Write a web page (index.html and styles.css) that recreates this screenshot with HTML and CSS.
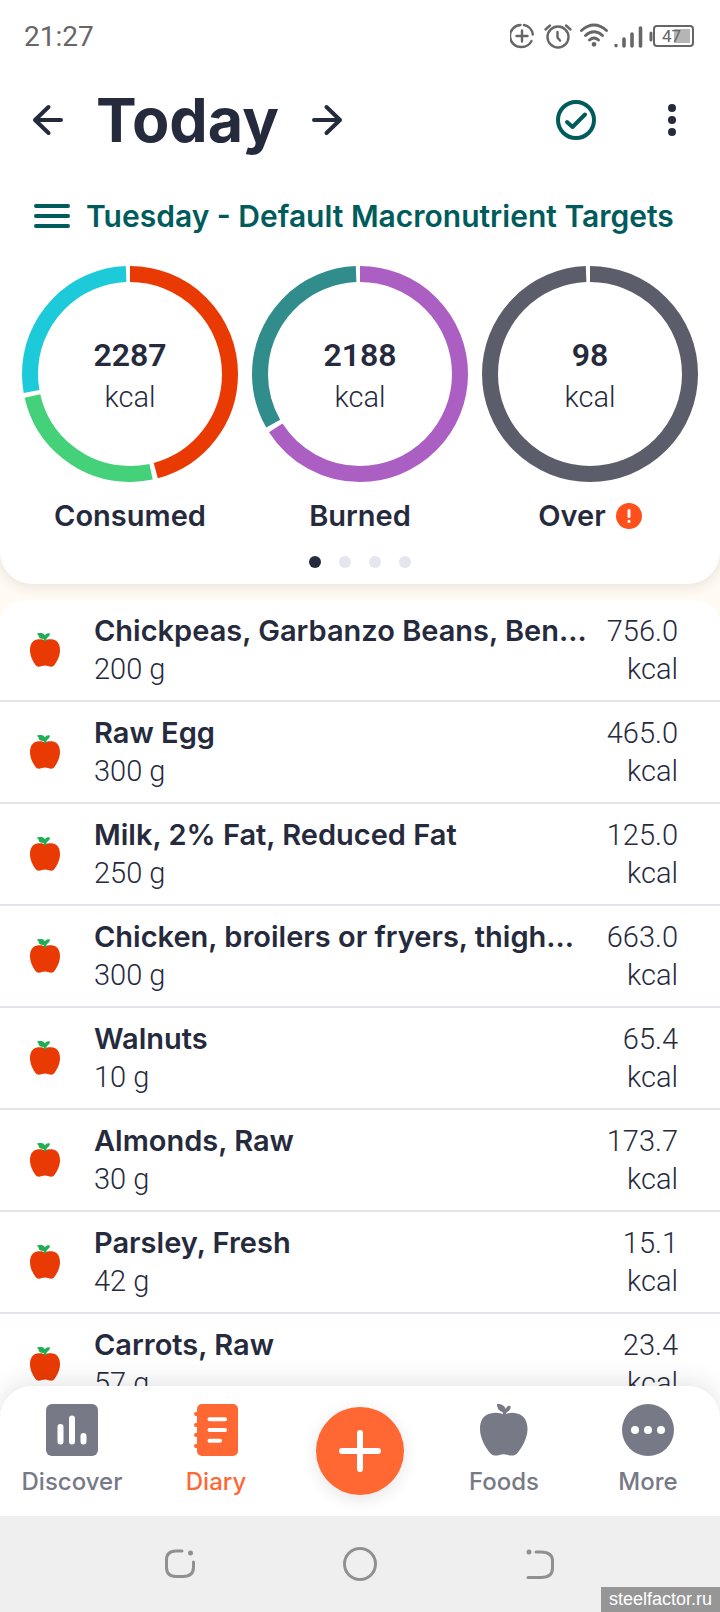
FILE: index.html
```html
<!DOCTYPE html>
<html lang="en">
<head>
  <meta charset="UTF-8">
  <meta name="viewport" content="width=device-width, initial-scale=1">
  <title>Diary - Today</title>
  <link rel="stylesheet" href="styles.css">
</head>
<body>
  <svg class="defs" aria-hidden="true">
    <symbol id="apple" viewBox="0 0 48 52">
      <path class="apple-body" d="M24 11C27 9 32 8 37 9.500C44 11 47.500 17 47.500 25C47.500 34 42 44 37 49.500C34 52 31 52 28 51C25 50 22 50 19.500 51C16 52 13.500 52 10.500 49.500C5.500 44 0 34 0 25C0 17 3 11 10.500 9.500C16 8 21 9 24 11Z"/>
      <path class="apple-leaf" d="M17 0C22 0 25 2 25.500 5C27 2 29 1 30.500 2C31 5 29 7 27 8C26 9 26 10 26 12H22.500C23 10 23 9 22.500 8C19 7 17 4 17 0Z"/>
    </symbol>
    <symbol id="apple-small" viewBox="0 0 30 34">
      <path class="apple-body" d="M15 7.500C17 6.500 20 6 23 6.500C28 7.500 30 12 30 17C30 23 27 29 23.500 33C21.500 34.500 20 33.500 18 33C16 32.300 14 32.300 12 33C10 33.500 8.500 34.500 6.500 33C3 29 0 23 0 17C0 12 2 7.500 7 6.500C10 6 13 6.500 15 7.500Z"/>
      <path class="apple-leaf" d="M7 .5C10 -.5 14 -.3 15 2.500C16 .5 18 -.2 20 .8C19.500 3.500 18 4 16.500 5.500V8.200H13.800V6C10 6 8.500 4.500 8.700 3C8.500 2 7.300 1.500 7 .5Z"/>
    </symbol>
  </svg>

  <div class="app">
    <section class="summary">
      <div class="status">
        <span class="clock">21:27</span>
        <svg class="status-icons" width="186" height="28" viewBox="0 0 186 28" fill="none" stroke="#666" stroke-width="2.400" stroke-linecap="round">
          <!-- data saver -->
          <path d="M10.500 3A11 11 0 0 0 11.500 25A11 11 0 0 0 21.500 19M14 3A11 11 0 0 1 22.800 12.500M12 8.500V19.500M6.500 14H17.500"/>
          <!-- alarm -->
          <circle cx="48" cy="15" r="10.500"/>
          <path d="M47.500 10V15.500L50 18.500M35.500 7.500L40 3.500M60.500 7.500L56 3.500"/>
          <!-- wifi -->
          <path d="M71.500 8.500Q84 -2.500 96.500 8.500M75.500 13.500Q84 6 92.500 13.500M79.500 18Q84 14 88.500 18" stroke-width="2.800"/>
          <circle cx="84" cy="22.300" r="1.200"/>
          <!-- signal -->
          <path d="M106 23.500V23.600M114 17V24M122 12V24M130.500 6V24" stroke-width="3.600"/>
          <!-- battery -->
          <rect x="164" y="7" width="16" height="14" fill="#b5b5b5" stroke="none"/>
          <rect x="144" y="4" width="39" height="20" rx="3" stroke-width="2"/>
          <path d="M141 11V18" stroke-width="3"/>
          <text class="battery-text" x="152" y="20">47</text>
        </svg>
      </div>

      <header class="header">
        <button class="icon-btn" aria-label="Previous day">
          <svg width="32" height="32" viewBox="0 0 32 32" fill="none" stroke="currentColor" stroke-width="4" stroke-linecap="round" stroke-linejoin="round"><path d="M29 16H3M16.500 3L3 16L16.500 29"/></svg>
        </button>
        <h1>Today</h1>
        <button class="icon-btn" aria-label="Next day">
          <svg width="32" height="32" viewBox="0 0 32 32" fill="none" stroke="currentColor" stroke-width="4" stroke-linecap="round" stroke-linejoin="round"><path d="M3 16H29M15.500 3L29 16L15.500 29"/></svg>
        </button>
        <span class="spacer"></span>
        <button class="icon-btn done" aria-label="Mark day complete">
          <svg width="40" height="40" viewBox="0 0 40 40" fill="none" stroke="currentColor" stroke-width="4" stroke-linecap="round" stroke-linejoin="round"><circle cx="20" cy="20" r="18"/><path d="M11 22L16.500 27L29 14.500"/></svg>
        </button>
        <button class="icon-btn menu" aria-label="Menu">
          <svg width="8" height="32" viewBox="0 0 8 32" fill="currentColor"><circle cx="4" cy="4" r="4"/><circle cx="4" cy="16" r="4"/><circle cx="4" cy="28" r="4"/></svg>
        </button>
      </header>

      <button class="targets">
        <svg width="36" height="24" viewBox="0 0 36 24" fill="none" stroke="currentColor" stroke-width="4" stroke-linecap="round"><path d="M2 2H34M2 12H34M2 22H34"/></svg>
        Tuesday - Default Macronutrient Targets
      </button>

      <div class="rings">
        <div class="ring-card">
          <div class="ring">
            <svg viewBox="0 0 216 216">
              <circle class="arc red" cx="108" cy="108" r="100" pathLength="360" stroke-dasharray="165 195"/>
              <circle class="arc green" cx="108" cy="108" r="100" pathLength="360" stroke-dasharray="89.500 270.500" stroke-dashoffset="-167.800"/>
              <circle class="arc cyan" cx="108" cy="108" r="100" pathLength="360" stroke-dasharray="97.800 262.200" stroke-dashoffset="-259.900"/>
            </svg>
            <div class="ring-text"><strong>2287</strong><span>kcal</span></div>
          </div>
          <div class="ring-label">Consumed</div>
        </div>
        <div class="ring-card">
          <div class="ring">
            <svg viewBox="0 0 216 216">
              <circle class="arc purple" cx="108" cy="108" r="100" pathLength="360" stroke-dasharray="237.400 122.600"/>
              <circle class="arc teal" cx="108" cy="108" r="100" pathLength="360" stroke-dasharray="117.500 242.500" stroke-dashoffset="-240.200"/>
            </svg>
            <div class="ring-text"><strong>2188</strong><span>kcal</span></div>
          </div>
          <div class="ring-label">Burned</div>
        </div>
        <div class="ring-card">
          <div class="ring">
            <svg viewBox="0 0 216 216">
              <circle class="arc gray" cx="108" cy="108" r="100" pathLength="360" stroke-dasharray="357.700 2.300"/>
            </svg>
            <div class="ring-text"><strong>98</strong><span>kcal</span></div>
          </div>
          <div class="ring-label">Over
            <svg width="26" height="26" viewBox="0 0 26 26"><circle cx="13" cy="13" r="13" fill="#ff4f1c"/><path d="M13 7.500V13.500M13 18.300V18.400" stroke="#fff" stroke-width="3" stroke-linecap="round"/></svg>
          </div>
        </div>
      </div>

      <div class="dots"><i class="on"></i><i></i><i></i><i></i></div>
    </section>

    <main class="list-wrap">
      <ul class="list">
        <li class="row">
          <svg class="food-icon"><use href="#apple-small"/></svg>
          <div class="food"><div class="name">Chickpeas, Garbanzo Beans, Ben…</div><div>200 g</div></div>
          <div class="energy">756.0<br>kcal</div>
        </li>
        <li class="row">
          <svg class="food-icon"><use href="#apple-small"/></svg>
          <div class="food"><div class="name">Raw Egg</div><div>300 g</div></div>
          <div class="energy">465.0<br>kcal</div>
        </li>
        <li class="row">
          <svg class="food-icon"><use href="#apple-small"/></svg>
          <div class="food"><div class="name">Milk, 2% Fat, Reduced Fat</div><div>250 g</div></div>
          <div class="energy">125.0<br>kcal</div>
        </li>
        <li class="row">
          <svg class="food-icon"><use href="#apple-small"/></svg>
          <div class="food"><div class="name">Chicken, broilers or fryers, thigh…</div><div>300 g</div></div>
          <div class="energy">663.0<br>kcal</div>
        </li>
        <li class="row">
          <svg class="food-icon"><use href="#apple-small"/></svg>
          <div class="food"><div class="name">Walnuts</div><div>10 g</div></div>
          <div class="energy">65.4<br>kcal</div>
        </li>
        <li class="row">
          <svg class="food-icon"><use href="#apple-small"/></svg>
          <div class="food"><div class="name">Almonds, Raw</div><div>30 g</div></div>
          <div class="energy">173.7<br>kcal</div>
        </li>
        <li class="row">
          <svg class="food-icon"><use href="#apple-small"/></svg>
          <div class="food"><div class="name">Parsley, Fresh</div><div>42 g</div></div>
          <div class="energy">15.1<br>kcal</div>
        </li>
        <li class="row">
          <svg class="food-icon"><use href="#apple-small"/></svg>
          <div class="food"><div class="name">Carrots, Raw</div><div>57 g</div></div>
          <div class="energy">23.4<br>kcal</div>
        </li>
      </ul>
    </main>

    <nav class="tabs">
      <a class="tab" href="#discover">
        <svg width="52" height="52" viewBox="0 0 52 52"><rect width="52" height="52" rx="6" fill="currentColor"/><path d="M14.500 23V37.500M26 14.500V37.500M37.500 32V37.500" stroke="#fff" stroke-width="6" stroke-linecap="round"/></svg>
        Discover
      </a>
      <a class="tab active" href="#diary">
        <svg width="44" height="52" viewBox="0 0 44 52"><rect x="3" width="41" height="52" rx="5" fill="currentColor"/><path d="M2 10H6M2 21H6M2 31H6M2 42H6" stroke="currentColor" stroke-width="4" stroke-linecap="round"/><path d="M15.500 15.200H31M15.500 26H31M15.500 36.800H26" stroke="#fff" stroke-width="4" stroke-linecap="round"/></svg>
        Diary
      </a>
      <div class="tab">
        <button class="add" aria-label="Add">
          <svg width="42" height="42" viewBox="0 0 42 42" stroke="#fff" stroke-width="6" stroke-linecap="round"><path d="M21 3V39M3 21H39"/></svg>
        </button>
      </div>
      <a class="tab" href="#foods">
        <svg width="48" height="52"><use href="#apple"/></svg>
        Foods
      </a>
      <a class="tab" href="#more">
        <svg width="52" height="52" viewBox="0 0 52 52"><circle cx="26" cy="26" r="26" fill="currentColor"/><g fill="#fff"><circle cx="13" cy="26" r="4"/><circle cx="26" cy="26" r="4"/><circle cx="39" cy="26" r="4"/></g></svg>
        More
      </a>
    </nav>

    <footer class="sysnav">
      <button class="icon-btn" aria-label="Recent apps">
        <svg width="32" height="32" viewBox="0 0 32 32" fill="none" stroke="#909090" stroke-width="3" stroke-linecap="round"><path d="M18 3H12Q2.500 3 2.500 12V19Q2.500 28.500 12 28.500H19Q29.500 28.500 29.500 19V14"/><circle cx="26.500" cy="5" r="2.500" fill="#909090" stroke="none"/></svg>
      </button>
      <button class="icon-btn" aria-label="Home">
        <svg width="34" height="34" viewBox="0 0 34 34" fill="none" stroke="#909090" stroke-width="3"><circle cx="17" cy="17" r="15.500"/></svg>
      </button>
      <button class="icon-btn" aria-label="Back">
        <svg width="32" height="32" viewBox="0 0 32 32" fill="none" stroke="#909090" stroke-width="3" stroke-linecap="round"><path d="M12 4H17Q28.500 4 28.500 13V20Q28.500 29.500 17 29.500H4"/><circle cx="5" cy="4" r="2.500" fill="#909090" stroke="none"/></svg>
      </button>
      <span class="watermark">steelfactor.ru</span>
    </footer>
  </div>
</body>
</html>
```
FILE: styles.css
```css
* { box-sizing: border-box; }

body {
  margin: 0;
  background: #fffaf2;
  color: #262a3d;
  font-family: Roboto, sans-serif;
  font-size: 29px;
  font-weight: 300;
  line-height: 38px;
}

svg { display: block; flex-shrink: 0; }

button {
  border: 0;
  padding: 0;
  background: none;
  color: inherit;
  cursor: pointer;
}

.defs { position: absolute; width: 0; height: 0; }
.apple-body { fill: var(--body, currentColor); }
.apple-leaf { fill: var(--leaf, currentColor); }

.app {
  display: flex;
  flex-direction: column;
  height: 100vh;
}

/* top card */
.summary {
  background: #fff;
  border-radius: 0 0 32px 32px;
  box-shadow: 0 2px 14px rgba(60, 50, 40, 0.12);
  padding-bottom: 16px;
}

.status {
  display: flex;
  align-items: center;
  justify-content: space-between;
  height: 72px;
  padding: 0 24px;
  color: #666;
  font-size: 28px;
  font-weight: 400;
}

.clock { padding-top: 2px; }

.battery-text {
  fill: #666;
  stroke: none;
  font-size: 17px;
}

.header {
  display: flex;
  align-items: center;
  height: 96px;
  padding: 0 44px 0 32px;
}

.header h1 {
  margin: 0 32px;
  font-family: Inter, sans-serif;
  font-size: 61px;
  font-weight: 700;
  line-height: 72px;
}

.spacer { flex: 1; }
.done { color: #005c5c; }
.menu { margin-left: 72px; }

.targets {
  display: flex;
  align-items: center;
  gap: 16px;
  margin: 28px 34px 30px;
  color: #005c5c;
  font-family: Inter, sans-serif;
  font-size: 30px;
  font-weight: 600;
  line-height: 40px;
  white-space: nowrap;
}

.rings {
  display: grid;
  grid-template-columns: repeat(3, 1fr);
  gap: 14px;
  padding: 0 22px;
}

.ring {
  display: grid;
  align-items: center;
}

.ring > * { grid-area: 1 / 1; }

.ring-text {
  padding-top: 4px;
  text-align: center;
  line-height: 42px;
}

.ring-text strong,
.ring-text span { display: block; }

.ring-text strong {
  font-size: 32px;
  font-weight: 600;
}

.arc {
  fill: none;
  stroke-width: 16;
  transform: rotate(-90deg);
  transform-origin: center;
}

.red { stroke: #ea3a03; }
.green { stroke: #44d17a; }
.cyan { stroke: #1ccad9; }
.purple { stroke: #ac5fc2; }
.teal { stroke: #318c8c; }
.gray { stroke: #5b5d6a; }

.ring-label {
  display: flex;
  align-items: center;
  justify-content: center;
  gap: 10px;
  margin-top: 14px;
  font-family: Inter, sans-serif;
  font-weight: 600;
  line-height: 40px;
}

.dots {
  display: flex;
  justify-content: center;
  gap: 18px;
  margin-top: 20px;
}

.dots i {
  width: 12px;
  height: 12px;
  border-radius: 50%;
  background: #e4e6ef;
}

.dots .on { background: #262a3d; }

/* diary entries */
.list-wrap {
  flex: 1;
  min-height: 0;
  margin-top: 16px;
  overflow: hidden;
}

.list {
  list-style: none;
  margin: 0;
  padding: 0;
  background: #fff;
  border-radius: 24px 24px 0 0;
}

.row {
  display: flex;
  align-items: center;
  padding: 12px 42px 12px 30px;
  border-bottom: 2px solid #e2e5ea;
}

.food-icon {
  --body: #ea3a03;
  --leaf: #1fae56;
  width: 30px;
  height: 34px;
}

.food {
  flex: 1;
  min-width: 0;
  margin: 0 16px 0 34px;
}

.name {
  overflow: hidden;
  font-family: Inter, sans-serif;
  font-weight: 600;
  text-overflow: ellipsis;
  white-space: nowrap;
}

.energy {
  min-width: 72px;
  text-align: right;
}

/* bottom bar sits over the end of the list */
.tabs {
  position: relative;
  display: grid;
  grid-template-columns: repeat(5, 1fr);
  align-items: center;
  height: 130px;
  margin-top: -32px;
  background: #fff;
  border-radius: 32px 32px 0 0;
  box-shadow: 0 -4px 24px rgba(38, 42, 61, 0.12);
}

.tab {
  display: flex;
  flex-direction: column;
  align-items: center;
  gap: 10px;
  color: #777986;
  font-family: Inter, sans-serif;
  font-size: 24px;
  font-weight: 500;
  line-height: 32px;
  text-decoration: none;
}

.tab.active { color: #ff6833; }

.add {
  display: grid;
  place-items: center;
  width: 88px;
  height: 88px;
  border-radius: 50%;
  background: #ff6833;
  box-shadow: 0 4px 16px rgba(38, 42, 61, 0.12);
}

.sysnav {
  position: relative;
  display: grid;
  grid-template-columns: repeat(3, 1fr);
  place-items: center;
  height: 96px;
  padding: 0 90px;
  background: #efefef;
}

.watermark {
  position: absolute;
  right: 0;
  bottom: 0;
  padding: 0 8px;
  background: #969696;
  color: #fff;
  font-family: "Liberation Sans", sans-serif;
  font-size: 18px;
  font-weight: 400;
  line-height: 25px;
}
```
